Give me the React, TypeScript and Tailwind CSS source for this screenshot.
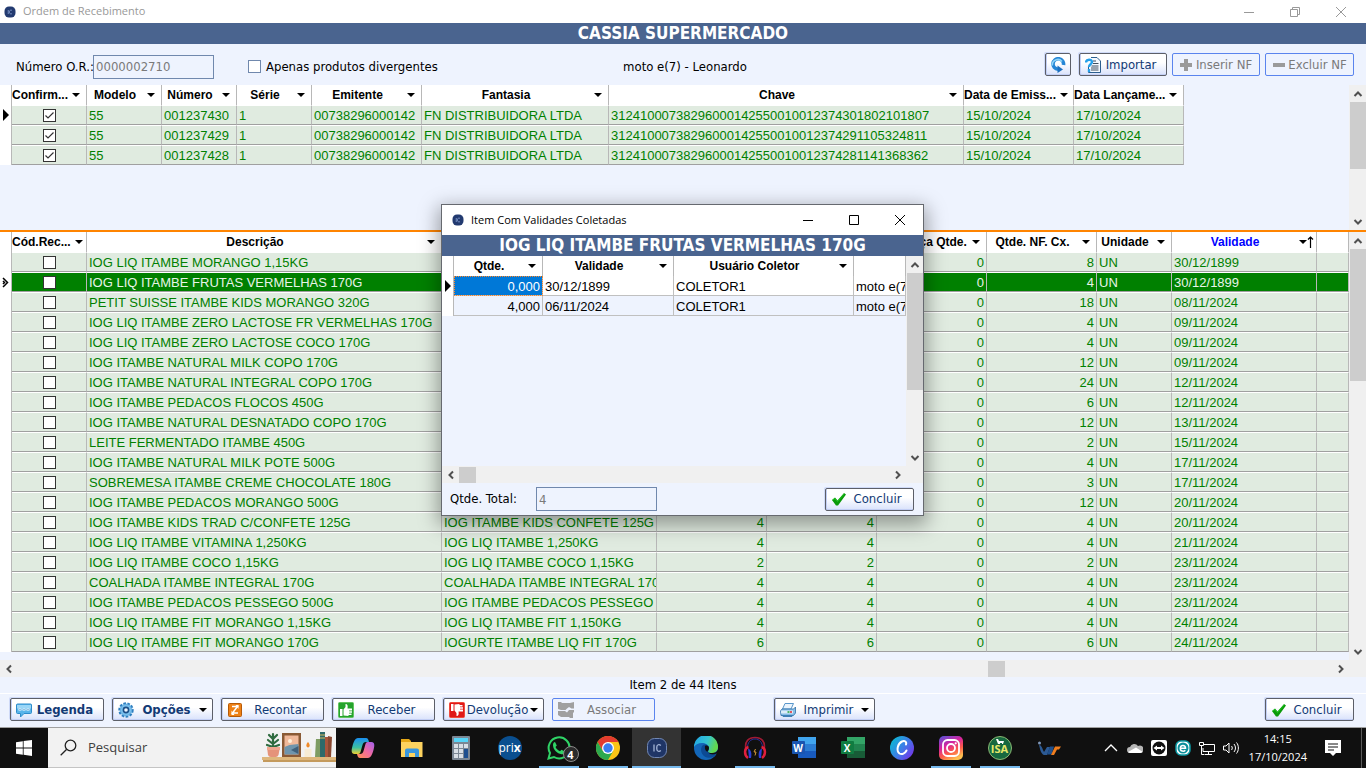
import type { ReactNode } from 'react'

interface Column {
  label: string
  width?: number
  align?: 'left' | 'right'
  sorted?: boolean
}

type Cell = string | boolean

const NOTE_COLUMNS: Column[] = [
  { label: 'Confirm...', width: 75 },
  { label: 'Modelo', width: 75 },
  { label: 'Número', width: 75 },
  { label: 'Série', width: 75 },
  { label: 'Emitente', width: 110 },
  { label: 'Fantasia', width: 187 },
  { label: 'Chave', width: 355 },
  { label: 'Data de Emiss...', width: 110 },
  { label: 'Data Lançame...', width: 110 },
]

const NOTES: Cell[][] = [
  [true, '55', '001237430', '1', '00738296000142', 'FN DISTRIBUIDORA LTDA', '31241000738296000142550010012374301802101807', '15/10/2024', '17/10/2024'],
  [true, '55', '001237429', '1', '00738296000142', 'FN DISTRIBUIDORA LTDA', '31241000738296000142550010012374291105324811', '15/10/2024', '17/10/2024'],
  [true, '55', '001237428', '1', '00738296000142', 'FN DISTRIBUIDORA LTDA', '31241000738296000142550010012374281141368362', '15/10/2024', '17/10/2024'],
]

const ITEM_COLUMNS: Column[] = [
  { label: 'Cód.Rec...', width: 75 },
  { label: 'Descrição', width: 355 },
  { label: '', width: 215 },
  { label: '', width: 110, align: 'right' },
  { label: '', width: 110, align: 'right' },
  { label: 'Diferença Qtde.', width: 110, align: 'right' },
  { label: 'Qtde. NF. Cx.', width: 110, align: 'right' },
  { label: 'Unidade', width: 75 },
  { label: 'Validade', width: 145, sorted: true },
  { label: '' },
]

const ITEMS: Cell[][] = [
  [false, 'IOG LIQ ITAMBE MORANGO 1,15KG', '', '', '', '0', '8', 'UN', '30/12/1899', ''],
  [false, 'IOG LIQ ITAMBE FRUTAS VERMELHAS 170G', '', '', '', '0', '4', 'UN', '30/12/1899', ''],
  [false, 'PETIT SUISSE ITAMBE KIDS MORANGO 320G', '', '', '', '0', '18', 'UN', '08/11/2024', ''],
  [false, 'IOG LIQ ITAMBE ZERO LACTOSE FR VERMELHAS 170G', '', '', '', '0', '4', 'UN', '09/11/2024', ''],
  [false, 'IOG LIQ ITAMBE ZERO LACTOSE COCO 170G', '', '', '', '0', '4', 'UN', '09/11/2024', ''],
  [false, 'IOG ITAMBE NATURAL MILK COPO 170G', '', '', '', '0', '12', 'UN', '09/11/2024', ''],
  [false, 'IOG ITAMBE NATURAL INTEGRAL COPO 170G', '', '', '', '0', '24', 'UN', '12/11/2024', ''],
  [false, 'IOG ITAMBE PEDACOS FLOCOS 450G', '', '', '', '0', '6', 'UN', '12/11/2024', ''],
  [false, 'IOG ITAMBE NATURAL DESNATADO COPO 170G', '', '', '', '0', '12', 'UN', '13/11/2024', ''],
  [false, 'LEITE FERMENTADO ITAMBE 450G', '', '', '', '0', '2', 'UN', '15/11/2024', ''],
  [false, 'IOG ITAMBE NATURAL MILK POTE 500G', '', '', '', '0', '4', 'UN', '17/11/2024', ''],
  [false, 'SOBREMESA ITAMBE CREME CHOCOLATE 180G', '', '', '', '0', '3', 'UN', '17/11/2024', ''],
  [false, 'IOG ITAMBE PEDACOS MORANGO 500G', '', '', '', '0', '12', 'UN', '20/11/2024', ''],
  [false, 'IOG ITAMBE KIDS TRAD C/CONFETE 125G', 'IOG ITAMBE KIDS CONFETE 125G', '4', '4', '0', '4', 'UN', '20/11/2024', ''],
  [false, 'IOG LIQ ITAMBE VITAMINA 1,250KG', 'IOG LIQ ITAMBE 1,250KG', '4', '4', '0', '4', 'UN', '21/11/2024', ''],
  [false, 'IOG LIQ ITAMBE COCO 1,15KG', 'IOG LIQ ITAMBE COCO 1,15KG', '2', '2', '0', '2', 'UN', '23/11/2024', ''],
  [false, 'COALHADA ITAMBE INTEGRAL 170G', 'COALHADA ITAMBE INTEGRAL 170G', '4', '4', '0', '4', 'UN', '23/11/2024', ''],
  [false, 'IOG ITAMBE PEDACOS PESSEGO 500G', 'IOG ITAMBE PEDACOS PESSEGO', '4', '4', '0', '4', 'UN', '23/11/2024', ''],
  [false, 'IOG LIQ ITAMBE FIT MORANGO 1,15KG', 'IOG LIQ ITAMBE FIT 1,150KG', '4', '4', '0', '4', 'UN', '24/11/2024', ''],
  [false, 'IOG LIQ ITAMBE FIT MORANGO 170G', 'IOGURTE ITAMBE LIQ FIT 170G', '6', '6', '0', '6', 'UN', '24/11/2024', ''],
]

const DATE_COLUMNS: Column[] = [
  { label: 'Qtde.', width: 89, align: 'right' },
  { label: 'Validade', width: 131 },
  { label: 'Usuário Coletor', width: 180 },
  { label: '' },
]

const DATES: Cell[][] = [
  ['0,000', '30/12/1899', 'COLETOR1', 'moto e(7'],
  ['4,000', '06/11/2024', 'COLETOR1', 'moto e(7'],
]

function CheckBox({ checked = false, label, className = 'border-[#333]' }: { checked?: boolean; label?: string; className?: string }) {
  return (
    <span className="grid">
      <input
        type="checkbox"
        defaultChecked={checked}
        aria-label={label}
        className={`peer col-start-1 row-start-1 size-[13px] appearance-none border bg-white ${className}`}
      />
      <svg viewBox="0 0 13 13" className="pointer-events-none invisible col-start-1 row-start-1 size-[13px] peer-checked:visible">
        <path d="M2.500 6.500L5 9l5.500-5.500" fill="none" stroke="#333" strokeWidth="1.200" />
      </svg>
    </span>
  )
}

function Caret({ className = '' }: { className?: string }) {
  return (
    <svg viewBox="0 0 8 4" className={`h-1 w-2 shrink-0 ${className}`}>
      <path d="M0 0h8L4 4z" fill="#000" />
    </svg>
  )
}

function RowPointer({ double = false }: { double?: boolean }) {
  return double ? (
    <svg viewBox="0 0 7 11" className="ml-[2px] h-[11px] w-[7px]">
      <path d="M1 1l4.500 4.500L1 10M1 4l1.500 1.500L1 7" fill="none" stroke="#000" strokeWidth="1.500" />
    </svg>
  ) : (
    <svg viewBox="0 0 6 12" className="ml-[3px] h-3 w-[6px]">
      <path d="M0 0l6 6-6 6z" fill="#000" />
    </svg>
  )
}

interface GridProps {
  columns: Column[]
  rows: Cell[][]
  current: number
  variant: 'green' | 'plain'
  selected?: boolean
  className: string
}

function DataGrid({ columns, rows, current, variant, selected = false, className }: GridProps) {
  const rowClass = (i: number) => {
    if (variant === 'plain') return i % 2 ? 'bg-[#eef3fe] text-black' : 'bg-white text-black'
    return selected && i === current ? 'bg-[#008000] text-[#e8f4e8]' : 'bg-[#e0ebe0] text-[#008000]'
  }
  const cellBorder = variant === 'plain'
    ? 'border-r border-b border-[#c0c0c0]'
    : 'border-t border-r border-b border-t-white border-r-[#b8b8b8] border-b-[#a0a0a0]'

  return (
    <table className={`table-fixed border-separate border-spacing-0 font-['Liberation_Sans',Arial,sans-serif] ${className}`}>
      <colgroup>
        <col className="w-3" />
        {columns.map((c, i) => (
          <col key={i} style={{ width: c.width }} />
        ))}
      </colgroup>
      <thead>
        <tr className="h-5 bg-white text-xs">
          <th className="border-r border-[#b8b8b8] p-0" />
          {columns.map((c, i) => (
            <th key={i} className="overflow-hidden border-r border-[#b8b8b8] p-0 font-bold">
              {c.label && (
                <div className="flex items-center">
                  <span className={`flex-1 text-center leading-5 whitespace-nowrap ${c.sorted ? 'text-[#0000ff]' : 'text-black'}`}>
                    {c.label}
                  </span>
                  <button type="button" aria-label={`Filtrar ${c.label}`} className="flex h-5 w-[18px] shrink-0 items-center justify-center pr-[2px]">
                    <Caret />
                    {c.sorted && (
                      <svg viewBox="0 0 7 12" className="h-3 w-[7px] shrink-0">
                        <path d="M3.500 12V1M1 3.500L3.500 1 6 3.500" fill="none" stroke="#000" strokeWidth="1.200" />
                      </svg>
                    )}
                  </button>
                </div>
              )}
            </th>
          ))}
        </tr>
      </thead>
      <tbody>
        {rows.map((row, r) => (
          <tr key={r} className={`h-5 text-[13px] ${rowClass(r)}`}>
            <td className="border-r border-[#b8b8b8] bg-white p-0">
              {r === current && <RowPointer double={selected} />}
            </td>
            {row.map((cell, i) => {
              if (typeof cell === 'boolean') {
                return (
                  <td key={i} className={`p-0 ${cellBorder}`}>
                    <div className="flex justify-center">
                      <CheckBox checked={cell} label={`${columns[i].label} linha ${r + 1}`} />
                    </div>
                  </td>
                )
              }
              const focus = variant === 'plain' && r === current && i === 0
              return (
                <td
                  key={i}
                  className={`overflow-hidden p-0 pt-[2px] leading-4 whitespace-nowrap ${cellBorder} ${
                    columns[i].align === 'right' ? 'pr-[2px] text-right' : 'pl-[2px] text-left'
                  } ${focus ? 'bg-[#0078d7] text-white outline-1 -outline-offset-1 outline-dotted outline-[#ff8728]' : ''}`}
                >
                  {cell}
                </td>
              )
            })}
          </tr>
        ))}
      </tbody>
    </table>
  )
}

function ScrollButton({ dir }: { dir: 'up' | 'down' | 'left' | 'right' }) {
  const paths = {
    up: 'M1.500 7L5 3.500 8.500 7',
    down: 'M1.500 3L5 6.500 8.500 3',
    left: 'M7 1.500L3.500 5 7 8.500',
    right: 'M3 1.500L6.500 5 3 8.500',
  }
  return (
    <button type="button" aria-label={dir} className="flex size-[17px] shrink-0 items-center justify-center">
      <svg viewBox="0 0 10 10" className="size-[10px]">
        <path d={paths[dir]} fill="none" stroke="#505050" strokeWidth="2" />
      </svg>
    </button>
  )
}

function VScroll({ thumb }: { thumb: string }) {
  return (
    <div className="flex w-[17px] shrink-0 flex-col bg-[#f0f0f0]">
      <ScrollButton dir="up" />
      <div className="flex-1 pl-px">
        <div className={`bg-[#cdcdcd] ${thumb}`} />
      </div>
      <ScrollButton dir="down" />
    </div>
  )
}

function ToolButton({ icon, children, className, bold = false, menu = false, disabled = false }: {
  icon: ReactNode
  children?: ReactNode
  className: string
  bold?: boolean
  menu?: boolean
  disabled?: boolean
}) {
  return (
    <button
      type="button"
      disabled={disabled}
      className={`flex h-[23px] shrink-0 items-center rounded-[2px] border px-[5px] ${
        disabled
          ? 'border-[#5a84ee] text-[#7a7a7a]'
          : 'border-[#5c5f68] bg-linear-to-b from-white from-40% to-[#d9e2fb] text-[#123a75] shadow-[inset_1px_-1px_0_#c3cff5,-1px_-1px_0_#cfdaf8]'
      } ${bold ? 'font-bold' : ''} ${className}`}
    >
      {icon}
      {children && <span className="flex-1 text-center whitespace-nowrap">{children}</span>}
      {menu && <Caret />}
    </button>
  )
}

function CheckIcon() {
  return (
    <svg viewBox="0 0 16 16" className="size-4 shrink-0">
      <path d="M1 9l3-2.500 2.500 3L13 2l2 1.500L7 14.500H5z" fill="#0a9a0a" />
      <path d="M1.500 9l2.500-1.500 2.500 3L13 3" fill="none" stroke="#1fc51f" strokeWidth="1" />
    </svg>
  )
}

function AppBadge({ className }: { className: string }) {
  return (
    <svg viewBox="0 0 24 24" className={className}>
      <rect x="1" y="1" width="22" height="22" rx="9" fill="#223a70" />
      <path d="M8.500 8v8M16 9a3 3 0 0 0-5 2v2a3 3 0 0 0 5 2" fill="none" stroke="#8ba3d6" strokeWidth="1.600" />
    </svg>
  )
}

function RefreshIcon() {
  return (
    <svg viewBox="0 0 16 16" className="size-4 shrink-0">
      <path d="M13.500 8A5.300 5.300 0 1 0 8 12.300" fill="none" stroke="#2586d6" strokeWidth="3.600" />
      <path d="M2.300 8.500A5.500 5.500 0 0 1 12 4.500" fill="none" stroke="#8fd4f8" strokeWidth="1.600" />
      <path d="M7.500 8.500l5.500 4-5.500 3.500z" fill="#1b6fc0" />
    </svg>
  )
}

function ImportIcon() {
  return (
    <svg viewBox="0 0 16 16" className="size-4 shrink-0">
      <path d="M6 .5h6l3.500 3.500v11.500h-12V9" fill="#f4f9ff" stroke="#2c5f8f" />
      <path d="M8 4h3M8 6.500h5.500M6.500 9h7M6 11h7.500M6 13h7.500" stroke="#3d4d5e" />
      <path d="M1 5.500C1 2 7 2 7 5c0 2-3 2.500-3 5M4 12v3" fill="none" stroke="#26a0ea" strokeWidth="2.400" />
    </svg>
  )
}

function LegendIcon() {
  return (
    <svg viewBox="0 0 16 16" className="size-4 shrink-0">
      <path d="M1.500 2h13a1 1 0 0 1 1 1v7.500a1 1 0 0 1-1 1H8L4.500 15v-3.500h-3a1 1 0 0 1-1-1V3a1 1 0 0 1 1-1z" fill="#58b4ea" stroke="#2e8ccb" />
      <path d="M1 3h14v3.500H1z" fill="#9ad6f7" />
      <path d="M2.500 7.500h3M6.500 7.500h3M10.500 7.500h3" stroke="#fff" strokeWidth="2" />
      <path d="M3.500 7.500h1M7.500 7.500h1M11.500 7.500h1" stroke="#2e7fbd" />
    </svg>
  )
}

function GearIcon() {
  return (
    <svg viewBox="0 0 16 16" className="size-4 shrink-0">
      <circle cx="8" cy="8" r="6.700" fill="#a5d8f5" stroke="#2f7fc0" strokeWidth="2" strokeDasharray="2.600 1.500" />
      <circle cx="8" cy="8" r="5.500" fill="#7cc3ef" stroke="#5ba3da" strokeWidth=".8" />
      <circle cx="8" cy="8" r="2.600" fill="#eef6ff" stroke="#1c4f88" strokeWidth="1.600" />
    </svg>
  )
}

function RecountIcon() {
  return (
    <svg viewBox="0 0 16 16" className="size-4 shrink-0">
      <rect x="1.500" y="1.500" width="13" height="13" rx="1" fill="#ee8116" stroke="#b65a08" />
      <path d="M5 4.500h5.500L5.500 11H11" fill="none" stroke="#fff" strokeWidth="1.500" />
      <path d="M8.500 3h3v4zM7.500 13h-3V8.500z" fill="#fff" />
    </svg>
  )
}

function ThumbIcon({ down = false }: { down?: boolean }) {
  return (
    <svg viewBox="0 0 16 16" className={`size-4 shrink-0 ${down ? '-scale-y-100' : ''}`}>
      <rect x=".5" y=".5" width="15" height="15" rx="1" fill={down ? '#e01818' : '#25a32c'} stroke={down ? '#f04a3c' : '#62c35f'} />
      <path d="M2 7h2.500v7H2zM5.500 13.500V7.500L7.500 5V2c2.200 0 2.500 2 2 4.500H14v2h-3v.7h3v1.600h-3v.7h2.500v1.500h-3v1z" fill="#fff" />
    </svg>
  )
}

function LinkIcon() {
  return (
    <svg viewBox="0 0 16 16" className="size-4 shrink-0">
      <path d="M0 0h3l1 1h8l4-1v6.500h-2.500L11 5 9 6.500 7.500 8H3l-3-1zM0 9h7l2 1.500L11 8h5v2l-1 1v5h-3l-1-1H3l-3-2z" fill="#a0a0a0" />
    </svg>
  )
}

function PrinterIcon() {
  return (
    <svg viewBox="0 0 16 16" className="size-4 shrink-0">
      <path d="M5 1.500h8.500L11 7H2.500z" fill="#eaf4fd" stroke="#5a97cb" />
      <path d="M2 7h11.500L15.500 5v6l-2 2.500H1L.5 9z" fill="#86bce6" stroke="#2d6ea6" strokeWidth=".8" />
      <path d="M1 8.500h12v3H1z" fill="#dcecf8" />
      <path d="M2 13h11l-1 2H3z" fill="#3f7fb5" />
      <path d="M7.500 10h2" stroke="#1fa03a" strokeWidth="1.500" />
      <path d="M10 10h2" stroke="#e0262b" strokeWidth="1.500" />
    </svg>
  )
}

function SignIcon({ plus = false }: { plus?: boolean }) {
  return (
    <svg viewBox="0 0 14 14" className="mx-px size-[14px] shrink-0">
      <path d={plus ? 'M1 7h12M7 1v12' : 'M1 7h12'} stroke="#9a9a9a" strokeWidth="4" />
    </svg>
  )
}

function ShelfArt() {
  return (
    <svg viewBox="0 0 74 32" className="h-8 w-[74px]">
      <path d="M0 25h74v3H0z" fill="#deb77c" />
      <path d="M1 28h73v2H1z" fill="#c49a5c" />
      <path d="M11 15V2M11 12L6 8M11 12l5-4M11 7L7 3M11 7l4-4M11 15l-6-2M11 15l6-2" stroke="#2f6b3f" strokeWidth="2.200" strokeLinecap="round" />
      <path d="M5 15h13l-1.500 8a3 3 0 0 1-3 2H9a3 3 0 0 1-3-2z" fill="#e5937a" />
      <path d="M5 15h13v3H5z" fill="#f0a68e" />
      <path d="M20 1h19v24H20z" fill="#8a5a35" />
      <path d="M22.500 3.500h14v19h-14z" fill="#f0b99a" />
      <circle cx="28" cy="9" r="2" fill="#fff0d8" />
      <path d="M22.500 15l5-2 9-1v10.500h-14z" fill="#6f95ac" />
      <path d="M29 18l7.500-4v8z" fill="#3f617b" />
      <path d="M42.500 17h7v8h-7z" fill="#f7ecd4" />
      <path d="M46 10c2.500 3 2 5 0 5.500-2-.5-2.500-2.500 0-5.500z" fill="#f08a28" />
      <path d="M54 7h4v18h-5z" fill="#7e9c62" />
      <path d="M58 0h5v25h-5z" fill="#2e6a6a" />
      <path d="M58 3h5M58 6h5" stroke="#d7b65c" />
      <path d="M63 5h4v20h-4z" fill="#a9553c" />
      <path d="M66 4l4 1-1 20h-3z" fill="#8a4830" />
    </svg>
  )
}

function CopilotIcon() {
  return (
    <svg viewBox="0 0 24 24" className="size-6">
      <defs>
        <linearGradient id="cpA" x1="0" y1="0" x2="0" y2="1">
          <stop offset="0" stopColor="#1a8ff0" />
          <stop offset=".6" stopColor="#3dc1a0" />
          <stop offset="1" stopColor="#f0d030" />
        </linearGradient>
        <linearGradient id="cpB" x1="1" y1="0" x2="0" y2="1">
          <stop offset="0" stopColor="#a060f0" />
          <stop offset=".5" stopColor="#f06aa0" />
          <stop offset="1" stopColor="#ff9050" />
        </linearGradient>
      </defs>
      <path d="M7 2h8c2 0 2.500 2 3 4h-3c-2 0-3 1-3.500 3L9.500 16c-.6 2-2 2-3.500 2H3.500C0 18 .3 14 1.500 10S4 2 7 2z" fill="url(#cpA)" />
      <path d="M17 22H9c-2 0-2.500-2-3-4h3c2 0 3-1 3.500-3l2-7c.6-2 2-2 3.500-2h2.500c3.500 0 3.200 4 2 8S20 22 17 22z" fill="url(#cpB)" />
    </svg>
  )
}

function FolderIcon() {
  return (
    <svg viewBox="0 0 24 24" className="size-6">
      <path d="M1 3h8l2 2v3H1z" fill="#e6a817" />
      <path d="M1 6h21.500v15H1z" fill="#fdd35f" />
      <path d="M5 21v-6.500a2 2 0 0 1 2-2h10a2 2 0 0 1 2 2V21h-4v-4H9v4z" fill="#3a97dd" />
    </svg>
  )
}

function CalcIcon() {
  return (
    <svg viewBox="0 0 24 24" className="size-6">
      <rect x="3" y="0" width="18" height="24" rx="1" fill="#7b8794" />
      <path d="M5 2h14v4H5z" fill="#57d4f7" />
      <path d="M5 8h4v4H5zM10 8h4v4h-4zM15 8h4v4h-4zM5 13h4v4H5zM10 13h4v4h-4zM5 18h4v4H5zM10 18h4v4h-4z" fill="#d8dfe6" />
      <path d="M15 13h4v9h-4z" fill="#1e4f8f" />
    </svg>
  )
}

function PrixIcon() {
  return (
    <span className="flex size-6 items-center justify-center overflow-hidden rounded-full bg-[#0a4f8f] font-['Open_Sans',sans-serif] text-xs leading-none text-white">
      pri<b>x</b>
    </span>
  )
}

function WhatsAppIcon() {
  return (
    <span className="relative">
      <svg viewBox="0 0 24 24" className="size-6">
        <path d="M1.500 22.500L3 17A10.500 10.500 0 1 1 7 21z" fill="#101010" stroke="#2fd366" strokeWidth="2" />
        <path d="M8 6l1.800 3.500L8.500 11c1 2 2.500 3.500 4.500 4.300l1.500-1.500L18 15.500c0 2-1.500 3-3.500 2.800C10 17.500 6.500 14 6 9.500 5.800 7.500 6.800 6.200 8 6z" fill="#2fd366" />
      </svg>
      <span className="absolute top-[10px] left-4 flex size-4 items-center justify-center rounded-full border border-[#8a8a8a] bg-[#2b2b2b] font-['Open_Sans',sans-serif] text-[11px] leading-none font-bold text-white">
        4
      </span>
    </span>
  )
}

function ChromeIcon() {
  return (
    <svg viewBox="0 0 24 24" className="size-6">
      <circle cx="12" cy="12" r="12" fill="#fbc516" />
      <path d="M1.600 6A12 12 0 0 1 22.400 6H12L6.800 15z" fill="#e33b2e" />
      <path d="M1.600 6A12 12 0 0 0 12 24l5.200-9H6.800z" fill="#2da94f" />
      <circle cx="12" cy="12" r="6" fill="#fff" />
      <circle cx="12" cy="12" r="4.700" fill="#3a7df0" />
    </svg>
  )
}

function IcIcon() {
  return (
    <svg viewBox="0 0 24 24" className="size-6">
      <rect x="2.500" y="2.500" width="19" height="19" rx="7" fill="#1f3566" stroke="#7288b4" />
      <path d="M9 8.500v7M15.800 9.500c-1.500-1.500-4-1-4 1.500v2c0 2.500 2.500 3 4 1.500" fill="none" stroke="#a3b4d6" strokeWidth="1.300" />
    </svg>
  )
}

function EdgeIcon() {
  return (
    <svg viewBox="0 0 24 24" className="size-6">
      <defs>
        <linearGradient id="edgeTop" x1="0" y1="0" x2="1" y2="0.300">
          <stop offset="0" stopColor="#1fa2e8" />
          <stop offset=".6" stopColor="#35c4d0" />
          <stop offset="1" stopColor="#62d84e" />
        </linearGradient>
      </defs>
      <circle cx="12" cy="12" r="12" fill="#1366b8" />
      <path d="M0 11A12 12 0 0 1 24 11c0 4-3 6-6 6-2 0-4-.5-4-1.500s1-1.200 1-3.500C15 8.500 11 7 8 7c-4 0-7 2-8 4z" fill="url(#edgeTop)" />
      <path d="M9 9c-4 4-1.500 11 4 12.500 4 1 8-.5 9.500-4-3 1.800-8 1-8.500-2 .5-1 1-1.500 1-3.500-.5-3-4-4.500-6-3z" fill="#0c4a94" />
      <path d="M14 15.500c.5 3 5.500 3.800 8.500 2l1.500 2v-6c-1 2.500-3 3.500-6 3.500-2 0-4-.5-4-1.500z" fill="#101010" />
      <path d="M11 10c2-1 4 0 4 2s-1.500 2-1 3.500C12.500 16 10.500 14 11 10z" fill="#101010" />
    </svg>
  )
}

function HeadphonesIcon() {
  return (
    <svg viewBox="0 0 24 24" className="size-6">
      <path d="M3 14C1 5 6 1.500 12 1.500S23 5 21 14" fill="none" stroke="#a01a34" strokeWidth="1.600" />
      <path d="M4.500 13C4 6 8 3 12 3s8 3 7.500 10" fill="none" stroke="#2b2f9a" strokeWidth="1" />
      <path d="M5.500 11C1 12 1 19 5 22" fill="none" stroke="#e01f3d" strokeWidth="2.500" />
      <path d="M18.500 11C23 12 23 19 19 22" fill="none" stroke="#e01f3d" strokeWidth="2.500" />
      <path d="M5 12.500c3 1 4 5 3 9.500H6zM19 12.500c-3 1-4 5-3 9.500h2z" fill="#2a3fd8" />
      <path d="M12.500 13L11 16h2l-1 3.500" fill="none" stroke="#d69a3a" />
    </svg>
  )
}

function OfficeIcon({ letter, tones }: { letter: string; tones: string[] }) {
  return (
    <span className="relative">
      <svg viewBox="0 0 24 24" className="size-6">
        <path d="M6 1h18v7H6z" fill={tones[0]} />
        <path d="M6 8h18v7H6z" fill={tones[1]} />
        <path d="M6 15h18v7H6z" fill={tones[2]} />
        <rect x="0" y="5" width="13" height="13" rx="1" fill={tones[3]} />
      </svg>
      <span className="absolute top-[5px] left-0 flex size-[13px] items-center justify-center font-['Open_Sans',sans-serif] text-[10px] leading-none font-bold text-white">
        {letter}
      </span>
    </span>
  )
}

function CanvaIcon() {
  return (
    <svg viewBox="0 0 24 24" className="size-6">
      <defs>
        <linearGradient id="canva" x1="0" y1="0.200" x2="1" y2="0.900">
          <stop offset="0" stopColor="#08bcd2" />
          <stop offset=".5" stopColor="#3f7be8" />
          <stop offset="1" stopColor="#7d2ae8" />
        </linearGradient>
      </defs>
      <circle cx="12" cy="12" r="12" fill="url(#canva)" />
      <path d="M16 8.500C17 5.500 14.500 4.500 12 5.500c-4.500 2-6 9.500-2.500 12 2.500 1.500 5.500 0 7-3" fill="none" stroke="#fff" strokeWidth="2" strokeLinecap="round" />
    </svg>
  )
}

function InstagramIcon() {
  return (
    <svg viewBox="0 0 24 24" className="size-6">
      <defs>
        <linearGradient id="insta" x1="0.100" y1="0" x2="0.600" y2="1">
          <stop offset="0" stopColor="#5b51d8" />
          <stop offset=".4" stopColor="#d6249f" />
          <stop offset=".7" stopColor="#fd5949" />
          <stop offset="1" stopColor="#fdc04f" />
        </linearGradient>
      </defs>
      <rect width="24" height="24" rx="5" fill="url(#insta)" />
      <rect x="4" y="4" width="16" height="16" rx="4.500" fill="none" stroke="#fff" strokeWidth="1.800" />
      <circle cx="12" cy="12" r="4" fill="none" stroke="#fff" strokeWidth="1.800" />
      <circle cx="16.700" cy="7.300" r="1.100" fill="#fff" />
    </svg>
  )
}

function IsaIcon() {
  return (
    <span className="relative flex size-6 items-center justify-center rounded-full border border-[#8ab872] bg-[#17683f] font-['Open_Sans',sans-serif] text-[11px] leading-none font-bold text-[#e6e86a]">
      <svg viewBox="0 0 8 5" className="absolute top-[2px] h-[5px] w-2">
        <path d="M0 0h2l1 2h5l-1 3H6V4H4v1H2z" fill="#fff" />
      </svg>
      ISA
    </span>
  )
}

function VdrIcon() {
  return (
    <svg viewBox="0 0 24 24" className="size-6">
      <path d="M2 9c2 0 3 2 4 5l1 2 3-5h3l-3 8H7c-3-1-4-6-5-10z" fill="#2c5a94" />
      <circle cx="2.500" cy="7" r="1.500" fill="#7f97b8" />
      <path d="M13 10.500h4l-2.500 8H10z" fill="#1f4f8c" />
      <path d="M18 10.500h6l-2 3h-2l-3 5.500h-3z" fill="#ee7d1e" />
    </svg>
  )
}

interface TaskApp {
  name: string
  icon: ReactNode
  open?: boolean
  active?: boolean
}

const TASK_APPS: TaskApp[] = [
  { name: 'Copilot', icon: <CopilotIcon /> },
  { name: 'Explorador de Arquivos', icon: <FolderIcon /> },
  { name: 'Calculadora', icon: <CalcIcon /> },
  { name: 'Prix', icon: <PrixIcon /> },
  { name: 'WhatsApp', icon: <WhatsAppIcon />, open: true },
  { name: 'Chrome', icon: <ChromeIcon />, open: true },
  { name: 'IC', icon: <IcIcon />, open: true, active: true },
  { name: 'Edge', icon: <EdgeIcon /> },
  { name: 'Headset', icon: <HeadphonesIcon />, open: true },
  { name: 'Word', icon: <OfficeIcon letter="W" tones={['#41a5ee', '#2b7cd3', '#185abd', '#1a55b0']} /> },
  { name: 'Excel', icon: <OfficeIcon letter="X" tones={['#33a567', '#21834f', '#185c37', '#107c41']} /> },
  { name: 'Canva', icon: <CanvaIcon /> },
  { name: 'Instagram', icon: <InstagramIcon />, open: true },
  { name: 'ISA', icon: <IsaIcon />, open: true },
  { name: 'VDR', icon: <VdrIcon /> },
]

function TrayIcons() {
  return (
    <div className="flex items-center gap-2">
      <svg viewBox="0 0 16 16" className="size-4">
        <path d="M2 11l6-6 6 6" fill="none" stroke="#fff" strokeWidth="1.300" />
      </svg>
      <svg viewBox="0 0 16 16" className="size-4">
        <path d="M0 10a3 3 0 0 1 3-3 4.500 4.500 0 0 1 8-1 3.500 3.500 0 0 1 5 4.500A2.500 2.500 0 0 1 13.500 13H3a3 3 0 0 1-3-3z" fill="#b5b5b5" />
        <path d="M1 12l8-4.500 6.500 4.300a2.500 2.500 0 0 1-2 1.200H3a3 3 0 0 1-2-1z" fill="#fff" />
      </svg>
      <svg viewBox="0 0 16 16" className="size-4">
        <rect width="16" height="16" rx="2" fill="#fff" />
        <circle cx="8" cy="8" r="6.500" fill="#101010" />
        <path d="M2.500 8L6 5.500V7h4V5.500L13.500 8 10 10.500V9H6v1.500z" fill="#fff" />
      </svg>
      <svg viewBox="0 0 16 16" className="size-4">
        <rect x="1" y="1" width="14" height="14" rx="5" fill="#fff" stroke="#0b9aa5" strokeWidth="1.500" />
        <circle cx="8" cy="8" r="5.500" fill="#0b8f9b" />
        <path d="M5.500 8.300h5C10.500 4.500 5.300 4.500 5.300 8.200c0 3.500 3.700 3.500 5 2" fill="none" stroke="#fff" strokeWidth="1.500" />
      </svg>
      <svg viewBox="0 0 16 16" className="size-4">
        <path d="M5 4.500h10.500v7H4V8M9.500 12v2.500M6 14.500h7M.5 2.500h4v3h-4zM2.500 5.500v9h3" fill="none" stroke="#fff" />
      </svg>
      <svg viewBox="0 0 16 16" className="size-4">
        <path d="M.5 6H3l3-3v10l-3-3H.5zM8.500 6c1 1.200 1 2.800 0 4M11 4c2 2.500 2 5.500 0 8M13.500 2.500c2.500 3 2.500 8 0 11" fill="none" stroke="#fff" />
      </svg>
    </div>
  )
}

function Taskbar() {
  return (
    <div className="flex h-10 shrink-0 bg-[#101010] font-['Open_Sans','Noto_Sans',sans-serif] text-white">
      <button type="button" aria-label="Iniciar" className="flex w-12 shrink-0 items-center justify-center">
        <svg viewBox="0 0 16 16" className="size-4">
          <path d="M0 2.200l6.800-1v6.300H0zM7.600 1.100L16 0v7.500H7.600zM0 8.400h6.800v6.300l-6.800-1zM7.600 8.400H16V16l-8.400-1.200z" fill="#fff" />
        </svg>
      </button>
      <label className="flex w-72 shrink-0 items-center border-b border-[#c4c4c4] bg-[#f2f2f2] pl-3">
        <svg viewBox="0 0 17 17" className="size-[17px] shrink-0">
          <circle cx="10.500" cy="6.500" r="5.300" fill="none" stroke="#222" strokeWidth="1.300" />
          <path d="M6.500 10.500L.7 16.300" stroke="#222" strokeWidth="1.300" />
        </svg>
        <input
          type="search"
          aria-label="Pesquisar"
          placeholder="Pesquisar"
          className="ml-[11px] min-w-0 flex-1 bg-transparent text-[13px] text-black outline-none placeholder:text-[#404040]"
        />
        <ShelfArt />
      </label>
      <div className="flex pl-[2px]">
        {TASK_APPS.map((app) => (
          <button
            key={app.name}
            type="button"
            aria-label={app.name}
            className={`flex w-[49px] flex-col items-center ${app.active ? 'bg-[#333]' : ''}`}
          >
            <span className="flex h-[38px] shrink-0 items-center pt-[2px]">{app.icon}</span>
            {app.open && <span className={`h-[2px] shrink-0 bg-[#76b9ed] ${app.active ? 'w-[49px]' : 'w-10'}`} />}
          </button>
        ))}
      </div>
      <div className="ml-auto flex items-center">
        <TrayIcons />
        <time className="ml-[10px] text-center text-[11px] leading-[18px] whitespace-nowrap">
          14:15
          <br />
          17/10/2024
        </time>
        <svg viewBox="0 0 16 16" className="mr-5 ml-[18px] size-4">
          <path d="M0 0h16v13h-5l-3 3-3-3H0z" fill="#fff" />
          <path d="M3 4h10M3 7h10M3 10h6" stroke="#101010" />
        </svg>
        <span className="mr-1 h-full w-px bg-[#5a5a5a]" />
      </div>
    </div>
  )
}

function ExpiryDialog() {
  return (
    <div
      role="dialog"
      aria-label="Item Com Validades Coletadas"
      className="absolute top-[204px] left-[441px] flex h-[312px] w-[483px] flex-col border border-[#66696f] bg-[#eef3fe] shadow-[0_6px_18px_3px_rgba(0,0,0,0.350)]"
    >
      <div className="flex h-[30px] shrink-0 items-center bg-white pl-[10px] font-['Open_Sans','Noto_Sans',sans-serif] text-[11px] text-black">
        <AppBadge className="mr-[7px] size-3" />
        Item Com Validades Coletadas
        <div className="ml-auto flex">
          <button type="button" aria-label="Minimizar" className="flex w-[46px] justify-center">
            <svg viewBox="0 0 10 10" className="size-[10px]"><path d="M0 5.500h10" stroke="#000" /></svg>
          </button>
          <button type="button" aria-label="Maximizar" className="flex w-[46px] justify-center">
            <svg viewBox="0 0 10 10" className="size-[10px]"><path d="M.5.5h9v9h-9z" fill="none" stroke="#000" /></svg>
          </button>
          <button type="button" aria-label="Fechar" className="flex w-[46px] justify-center">
            <svg viewBox="0 0 10 10" className="size-[10px]"><path d="M0 0l10 10M10 0L0 10" stroke="#000" /></svg>
          </button>
        </div>
      </div>
      <h2 className="h-[21px] shrink-0 bg-[#4a648f] text-center text-[17px] leading-[21px] font-bold text-white">
        IOG LIQ ITAMBE FRUTAS VERMELHAS 170G
      </h2>
      <div className="flex min-h-0 flex-1">
        <div className="min-w-0 flex-1 overflow-hidden">
          <DataGrid columns={DATE_COLUMNS} rows={DATES} current={0} variant="plain" className="w-full" />
        </div>
        <VScroll thumb="h-[117px]" />
      </div>
      <div className="flex h-[17px] shrink-0 items-center bg-[#f0f0f0] pr-[17px]">
        <ScrollButton dir="left" />
        <div className="h-4 w-[17px] bg-[#cdcdcd]" />
        <div className="flex-1" />
        <ScrollButton dir="right" />
      </div>
      <div className="flex h-8 shrink-0 items-center pr-[9px] pl-2">
        <label htmlFor="qtde-total" className="w-[86px] whitespace-nowrap">Qtde. Total:</label>
        <input id="qtde-total" disabled defaultValue="4" className="h-6 w-[121px] border border-[#7088ad] px-[2px] text-[#7a7a7a]" />
        <ToolButton icon={<CheckIcon />} className="ml-auto w-[89px]">Concluir</ToolButton>
      </div>
    </div>
  )
}

export default function App() {
  return (
    <div className="flex h-screen flex-col overflow-hidden bg-[#eef3fe] font-['DejaVu_Sans_Condensed','DejaVu_Sans',sans-serif] text-[13px] text-black">
      <div className="flex h-[23px] shrink-0 items-center bg-white pr-[2px] pl-1 font-['Open_Sans','Noto_Sans',sans-serif] text-[11px] text-[#999]">
        <AppBadge className="mr-[7px] size-3" />
        Ordem de Recebimento
        <div className="ml-auto flex">
          <button type="button" aria-label="Minimizar" className="flex w-[46px] justify-center">
            <svg viewBox="0 0 10 10" className="size-[10px]"><path d="M0 5.500h10" stroke="currentColor" /></svg>
          </button>
          <button type="button" aria-label="Restaurar" className="flex w-[46px] justify-center">
            <svg viewBox="0 0 10 10" className="size-[10px]"><path d="M.5 2.500h7v7h-7zM2.500 2.500v-2h7v7h-2" fill="none" stroke="currentColor" /></svg>
          </button>
          <button type="button" aria-label="Fechar" className="flex w-[46px] justify-center">
            <svg viewBox="0 0 10 10" className="size-[10px]"><path d="M0 0l10 10M10 0L0 10" stroke="currentColor" /></svg>
          </button>
        </div>
      </div>

      <h1 className="h-[21px] shrink-0 bg-[#4a648f] text-center text-[17px] leading-[21px] font-bold text-white">
        CASSIA SUPERMERCADO
      </h1>

      <div className="flex h-[41px] shrink-0 items-center">
        <div className="flex flex-1 items-center pt-1 pl-4">
          <label htmlFor="numero-or" className="w-[77px] whitespace-nowrap">Número O.R.:</label>
          <input id="numero-or" disabled defaultValue="0000002710" className="h-6 w-[121px] border border-[#7088ad] px-[2px] text-[#7a7a7a]" />
          <label className="ml-[34px] flex items-center gap-[5px] whitespace-nowrap">
            <CheckBox className="border-[#7088ad]" />
            Apenas produtos divergentes
          </label>
        </div>
        <span className="pt-1">moto e(7) - Leonardo</span>
        <div className="flex flex-1 justify-end gap-[5px] pr-3">
          <ToolButton icon={<RefreshIcon />} className="mr-[3px] w-[26px] justify-center" />
          <ToolButton icon={<ImportIcon />} className="w-[88px]">Importar</ToolButton>
          <ToolButton icon={<SignIcon plus />} className="w-[88px]" disabled>Inserir NF</ToolButton>
          <ToolButton icon={<SignIcon />} className="w-[89px]" disabled>Excluir NF</ToolButton>
        </div>
      </div>

      <div className="flex h-[145px] shrink-0">
        <div className="min-w-0 flex-1 overflow-hidden">
          <DataGrid columns={NOTE_COLUMNS} rows={NOTES} current={0} variant="green" className="w-[1184px]" />
        </div>
        <VScroll thumb="h-[67px]" />
      </div>

      <div className="flex min-h-0 flex-1 border-t-2 border-[#ff8400]">
        <div className="min-w-0 flex-1 overflow-hidden">
          <DataGrid columns={ITEM_COLUMNS} rows={ITEMS} current={1} variant="green" selected className="w-full" />
        </div>
        <VScroll thumb="h-[132px]" />
      </div>

      <div className="flex h-[17px] shrink-0 items-center bg-[#f0f0f0] pr-[17px]">
        <ScrollButton dir="left" />
        <div className="flex flex-1 justify-end pr-[327px]">
          <div className="h-4 w-[17px] bg-[#cdcdcd]" />
        </div>
        <ScrollButton dir="right" />
      </div>
      <div className="h-4 shrink-0 text-center leading-4">Item 2 de 44 Itens</div>

      <div className="flex h-[35px] shrink-0 items-start gap-2 border-t border-b border-t-white border-b-[#a0a0a0] pt-1 pr-3 pl-[10px]">
        <ToolButton icon={<LegendIcon />} className="w-[94px]" bold>Legenda</ToolButton>
        <ToolButton icon={<GearIcon />} className="w-[101px]" bold menu>Opções</ToolButton>
        <ToolButton icon={<RecountIcon />} className="w-[103px]">Recontar</ToolButton>
        <ToolButton icon={<ThumbIcon />} className="w-[103px]">Receber</ToolButton>
        <ToolButton icon={<ThumbIcon down />} className="w-[101px]" menu>Devolução</ToolButton>
        <ToolButton icon={<LinkIcon />} className="w-[103px]" disabled>Associar</ToolButton>
        <ToolButton icon={<PrinterIcon />} className="ml-[111px] w-[101px]" menu>Imprimir</ToolButton>
        <ToolButton icon={<CheckIcon />} className="ml-auto w-[89px]">Concluir</ToolButton>
      </div>

      <Taskbar />
      <ExpiryDialog />
    </div>
  )
}
